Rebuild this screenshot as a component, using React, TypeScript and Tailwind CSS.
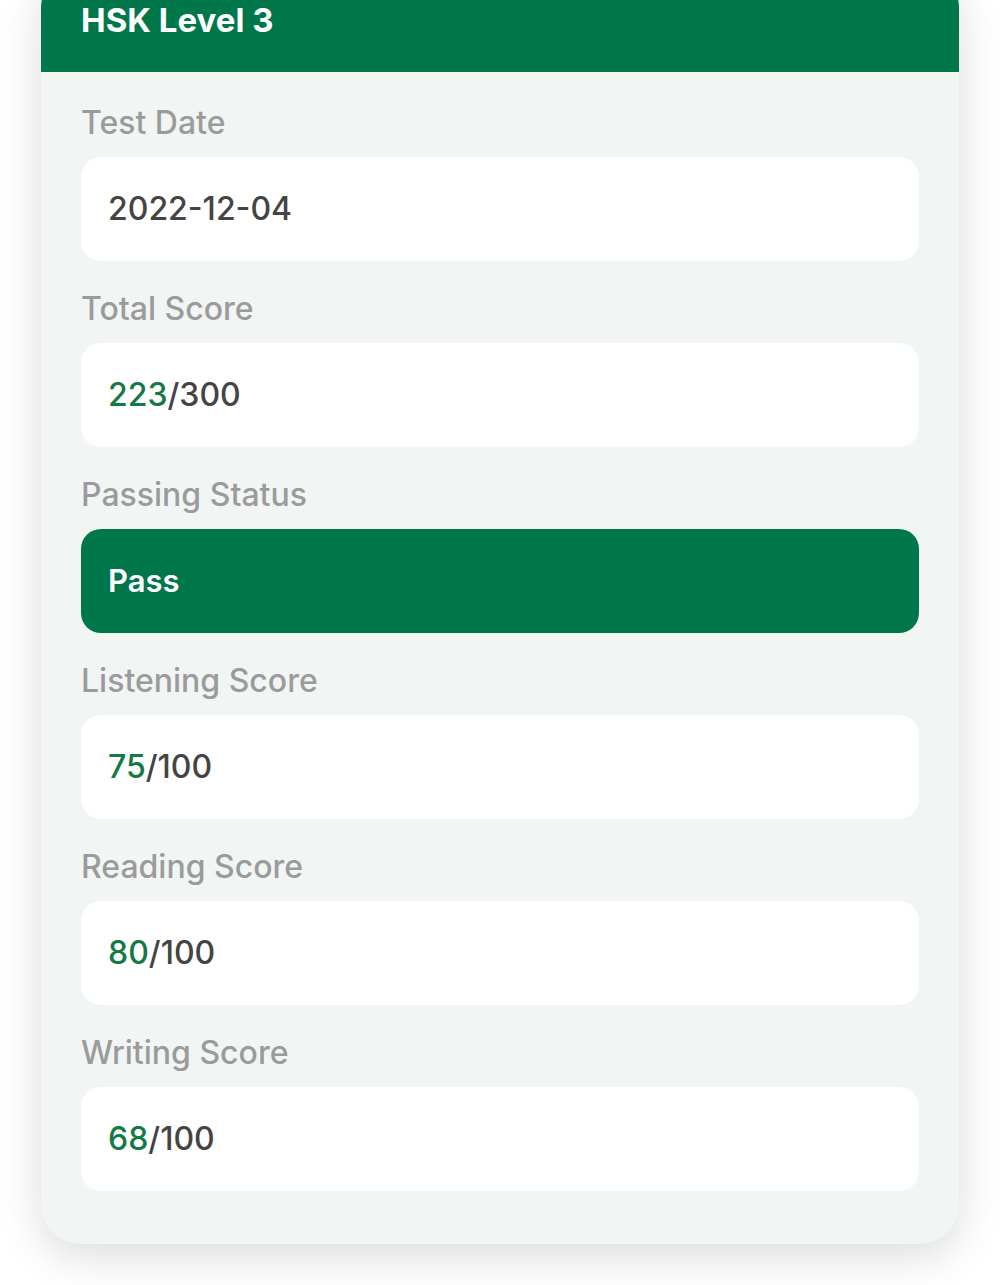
import React from "react";

type Field = { label: string; value?: string; score?: [string, string]; pass?: boolean };

const fields: Field[] = [
  { label: "Test Date", value: "2022-12-04" },
  { label: "Total Score", score: ["223", "300"] },
  { label: "Passing Status", value: "Pass", pass: true },
  { label: "Listening Score", score: ["75", "100"] },
  { label: "Reading Score", score: ["80", "100"] },
  { label: "Writing Score", score: ["68", "100"] },
];

export default function App() {
  return (
    <div className="min-h-[1285px] bg-white overflow-hidden" style={{ fontFamily: "Inter, 'Noto Sans', sans-serif" }}>
      <div className="mx-[41px] mt-[-32px] rounded-[40px] bg-[#f1f6f4] shadow-[0_12px_44px_rgba(0,0,0,0.14)] overflow-hidden">
        <div className="bg-[#00774a] px-[40px] py-[32px]">
          <div className="text-white text-[33px] leading-[40px] font-bold">HSK Level 3</div>
        </div>
        <div className="px-[40px] pt-[31px] pb-[53px] flex flex-col gap-[28px]">
          {fields.map((f) => (
            <div key={f.label} className="flex flex-col gap-[14px]">
              <div className="text-[32px] leading-[40px] font-medium text-[#9b9b9b]">{f.label}</div>
              <div
                className={
                  "h-[104px] rounded-[20px] px-[27px] flex items-center " +
                  (f.pass ? "bg-[#00774a] text-white text-[31px] font-semibold" : "bg-white text-[#444444] text-[32px] font-medium")
                }
              >
                {f.score ? (
                  <span>
                    <span className="text-[#137a44]">{f.score[0]}</span>/{f.score[1]}
                  </span>
                ) : (
                  f.value
                )}
              </div>
            </div>
          ))}
        </div>
      </div>
    </div>
  );
}
